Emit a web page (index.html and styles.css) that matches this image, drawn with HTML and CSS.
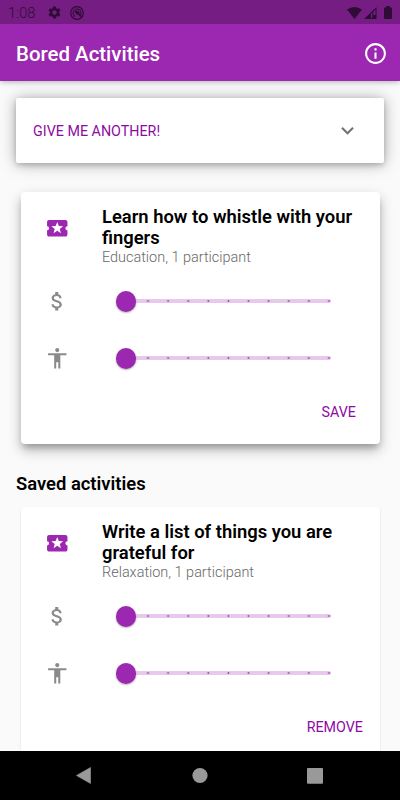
FILE: index.html
```html
<!DOCTYPE html>
<html lang="en">
<head>
<meta charset="utf-8">
<title>Bored Activities</title>
<link rel="stylesheet" href="styles.css">
</head>
<body>
<svg class="defs" aria-hidden="true">
  <symbol id="ticket" viewBox="0 0 24 24"><path d="M20 12c0-1.1.9-2 2-2V6c0-1.1-.9-2-2-2H4c-1.1 0-1.99.9-1.99 2v4c1.1 0 1.99.9 1.99 2s-.89 2-2 2v4c0 1.1.9 2 2 2h16c1.1 0 2-.9 2-2v-4c-1.1 0-2-.9-2-2zm-4.42 4.8L12 14.5l-3.58 2.3 1.08-4.12-3.29-2.69 4.24-.25L12 5.8l1.54 3.95 4.24.25-3.29 2.69 1.09 4.11z"/></symbol>
  <symbol id="money" viewBox="0 0 24 24"><path d="M11.8 10.9c-2.27-.59-3-1.2-3-2.15 0-1.09 1.01-1.85 2.7-1.85 1.78 0 2.44.85 2.5 2.1h2.21c-.07-1.72-1.12-3.3-3.21-3.81V3h-3v2.16c-1.94.42-3.5 1.68-3.5 3.61 0 2.31 1.91 3.46 4.7 4.13 2.5.6 3 1.48 3 2.41 0 .69-.49 1.79-2.7 1.79-2.06 0-2.87-.92-2.98-2.1h-2.2c.12 2.19 1.76 3.42 3.68 3.83V21h3v-2.15c1.95-.37 3.5-1.5 3.5-3.55 0-2.84-2.43-3.81-4.7-4.4z"/></symbol>
  <symbol id="person" viewBox="0 0 24 24"><path d="M12 2c1.1 0 2 .9 2 2s-.9 2-2 2-2-.9-2-2 .9-2 2-2zm9 7h-6v13h-2v-6h-2v6H9V9H3V7h18v2z"/></symbol>
</svg>
<div class="screen">
  <div class="status">
    <span class="clock">1:08</span>
    <svg class="gear" viewBox="0 0 24 24"><path d="M19.14 12.94c.04-.3.06-.61.06-.94 0-.32-.02-.64-.07-.94l2.03-1.58c.18-.14.23-.41.12-.61l-1.92-3.32c-.12-.22-.37-.29-.59-.22l-2.39.96c-.5-.38-1.03-.7-1.62-.94l-.36-2.54c-.04-.24-.24-.41-.48-.41h-3.84c-.24 0-.43.17-.47.41l-.36 2.54c-.59.24-1.13.57-1.62.94l-2.39-.96c-.22-.08-.47 0-.59.22L2.74 8.87c-.12.21-.08.47.12.61l2.03 1.58c-.05.3-.09.63-.09.94s.02.64.07.94l-2.03 1.58c-.18.14-.23.41-.12.61l1.92 3.32c.12.22.37.29.59.22l2.39-.96c.5.38 1.03.7 1.62.94l.36 2.54c.05.24.24.41.48.41h3.84c.24 0 .44-.17.47-.41l.36-2.54c.59-.24 1.13-.56 1.62-.94l2.39.96c.22.08.47 0 .59-.22l1.92-3.32c.12-.22.07-.47-.12-.61l-2.01-1.58zM12 15.6c-1.98 0-3.6-1.62-3.6-3.6s1.62-3.6 3.6-3.6 3.6 1.62 3.6 3.6-1.62 3.6-3.6 3.6z"/></svg>
    <svg class="badge" viewBox="0 0 14 14"><circle cx="7" cy="7" r="6.3" fill="none" stroke="currentColor" stroke-width="1.2"/><path d="M5.2 10.5A4 4 0 1 1 9.900 9.800" fill="none" stroke="currentColor" stroke-width="1.1"/><path d="M4.600 5.800 6.500 4.300 9.300 5.600 9.600 7.600 11.400 9.700 10.200 11 7.900 8.600 6.300 8.500z"/></svg>
    <div class="signals">
      <svg class="wifi" viewBox="0 0 15 12"><path d="M0 2.600Q7.500-2.500 15 2.600L7.500 12z"/></svg>
      <svg class="cell" viewBox="0 0 13 12"><path fill-rule="evenodd" d="M0 12 12.500 0v12zM7 6.800V11h1.300V5.600zM9.300 4.700V8h2.200V2.600z"/></svg>
      <svg class="battery" viewBox="0 0 8 13"><path d="M2.200 0h3.600v1.400H7a1 1 0 0 1 1 1V12a1 1 0 0 1-1 1H1a1 1 0 0 1-1-1V2.400a1 1 0 0 1 1-1h1.200z"/></svg>
    </div>
  </div>
  <header class="appbar">
    <h1>Bored Activities</h1>
    <svg class="info" viewBox="0 0 24 24"><path d="M11 7h2v2h-2zm0 4h2v6h-2zm1-9C6.480 2 2 6.480 2 12s4.480 10 10 10 10-4.480 10-10S17.520 2 12 2zm0 18c-4.410 0-8-3.590-8-8s3.590-8 8-8 8 3.590 8 8-3.590 8-8 8z"/></svg>
  </header>
  <main>
    <section class="panel">
      <span class="action">GIVE ME ANOTHER!</span>
      <svg class="chevron" viewBox="0 0 24 24"><path d="M16.590 8.590 12 13.170 7.410 8.590 6 10l6 6 6-6z"/></svg>
    </section>
    <article class="card raised">
      <div class="row head">
        <svg class="icon accent"><use href="#ticket"/></svg>
        <div class="text"><h2>Learn how to whistle with your fingers</h2><p>Education, 1 participant</p></div>
      </div>
      <div class="row"><svg class="icon"><use href="#money"/></svg><div class="slider"><i></i></div></div>
      <div class="row"><svg class="icon"><use href="#person"/></svg><div class="slider"><i></i></div></div>
      <div class="buttons save"><span class="action">SAVE</span></div>
    </article>
    <h3>Saved activities</h3>
    <article class="card">
      <div class="row head">
        <svg class="icon accent"><use href="#ticket"/></svg>
        <div class="text"><h2>Write a list of things you are grateful for</h2><p>Relaxation, 1 participant</p></div>
      </div>
      <div class="row"><svg class="icon"><use href="#money"/></svg><div class="slider"><i></i></div></div>
      <div class="row"><svg class="icon"><use href="#person"/></svg><div class="slider"><i></i></div></div>
      <div class="buttons"><span class="action">REMOVE</span></div>
    </article>
  </main>
  <nav class="navbar">
    <svg viewBox="0 0 400 49"><path d="M76.500 24.500 90.500 16.500v16z" stroke="#999" stroke-width=".6" stroke-linejoin="round"/><circle cx="200" cy="24.500" r="7.600"/><rect x="307" y="17" width="16" height="15.700" rx="1"/></svg>
  </nav>
</div>
</body>
</html>
```
FILE: styles.css
```css
* { box-sizing: border-box; }
body, h1, h2, h3, p { margin: 0; }
body { font-family: Roboto, sans-serif; overflow: hidden; }
svg { display: block; fill: currentColor; flex: none; }
.defs { display: none; }

.screen {
  width: 400px;
  height: 800px;
  display: flex;
  flex-direction: column;
  background: #fafafa;
  overflow: hidden;
}

.status {
  height: 24px;
  flex: none;
  display: flex;
  align-items: center;
  padding: 1px 8px 0;
  background: #751d83;
  color: #2f0c35;
  z-index: 2;
}
.clock { width: 39px; font-size: 14.6px; font-weight: 350; line-height: 24px; padding-top: 1px; }
.gear { width: 15px; height: 15px; }
.badge { width: 14px; height: 14px; margin-left: 8px; }
.signals { display: flex; align-items: center; margin-left: auto; }
.wifi { width: 15px; height: 12px; margin-right: 2px; }
.cell { width: 13px; height: 12px; margin-right: 7px; }
.battery { width: 8px; height: 13px; }

.appbar {
  height: 57px;
  flex: none;
  display: flex;
  align-items: center;
  justify-content: space-between;
  padding: 1px 12px 0 16px;
  background: #9c27b0;
  color: #fff;
  box-shadow: 0 2px 4px -1px rgba(0, 0, 0, .2), 0 4px 5px rgba(0, 0, 0, .04), 0 1px 10px rgba(0, 0, 0, .06);
  z-index: 1;
}
h1 { font-size: 20.45px; font-weight: 500; line-height: 24px; padding-top: 1px; }
.info { width: 25px; height: 25px; }

main { flex: 1; min-height: 0; overflow: hidden; padding-top: 17px; }
.action { font-size: 14.3px; font-weight: 450; line-height: 17px; padding-top: 1px; color: #8e0aa3; }

.panel {
  height: 65px;
  margin: 0 16px;
  padding: 0 24.5px 0 17px;
  display: flex;
  align-items: center;
  justify-content: space-between;
  background: #fff;
  border-radius: 2px;
  box-shadow: 0 2px 5px rgba(0, 0, 0, .16), 0 1px 15px rgba(0, 0, 0, .34);
}
.chevron { width: 25px; height: 25px; color: #737373; }

.card {
  height: 252px;
  margin: 29px 20.5px 0;
  background: #fff;
  border-radius: 4px;
  box-shadow: 0 1px 2px rgba(0, 0, 0, .16);
}
.raised { box-shadow: 0 5px 6px -2px rgba(0, 0, 0, .22), 0 6px 13px rgba(0, 0, 0, .27); }
.row {
  height: 57px;
  display: flex;
  align-items: center;
  padding-left: 24.5px;
}
.head { height: 81px; align-items: flex-start; padding-top: 14px; }
.icon { width: 24.5px; height: 24.5px; color: #8a8a8a; }
.head .icon { margin-top: 10px; }
.accent { color: #9c27b0; }
.text { margin-left: 32.5px; width: 258px; }
h2 { font-size: 18.4px; font-weight: 600; line-height: 21.3px; color: #000; }
p { font-size: 14.45px; font-weight: 350; line-height: 17px; color: #686868; }
.slider {
  position: relative;
  width: 205px;
  height: 4px;
  margin: -1px 0 0 56px;
  border-radius: 2px;
  background: #e6c9eb;
}
.slider i {
  position: absolute;
  left: -10px;
  top: -8px;
  width: 20.5px;
  height: 20.5px;
  border-radius: 50%;
  background: #9c27b0;
  box-shadow: 0 1px 2px rgba(0, 0, 0, .3);
  z-index: 1;
}
.slider::after {
  content: "";
  display: block;
  height: 4px;
  margin-left: 12px;
  background: radial-gradient(circle at 10px 2px, #ad4fbd .6px, transparent 1.3px) 0 0 / 20.12px 4px;
}

.buttons { display: flex; justify-content: flex-end; padding: 16px 16.5px 0 0; }
.save { padding-right: 23.5px; }
h3 {
  margin: 29px 16px 0;
  font-size: 18.4px;
  font-weight: 600;
  line-height: 22px;
  color: #000;
}
h3 + .card { margin-top: 12px; }

.navbar { height: 49px; flex: none; background: #000; color: #999; }
```
